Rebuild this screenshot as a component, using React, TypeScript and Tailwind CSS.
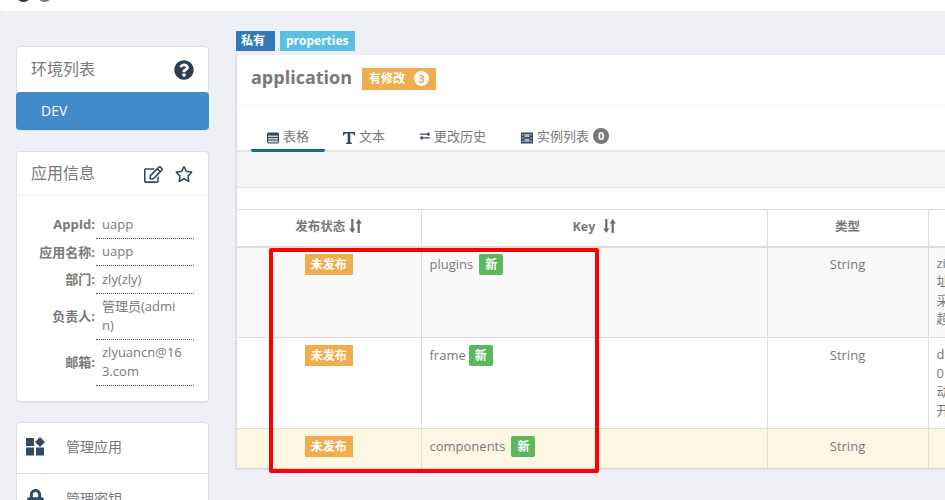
import { FaQuestionCircle, FaRegEdit, FaRegStar, FaLock, FaExchangeAlt } from 'react-icons/fa'

const font = { fontFamily: '"Open Sans", "Noto Sans CJK SC", sans-serif' }

function SortIcon() {
  return (
    <svg width="13" height="14" viewBox="0 0 13 14" fill="#6b6b6b" className="inline-block ml-1 align-[-2px]">
      <path d="M2.2 0h2.2v9.5h2L3.3 14 .2 9.5h2z" />
      <path d="M8.6 14h2.2V4.5h2L9.7 0 6.6 4.5h2z" />
    </svg>
  )
}

function TableIcon() {
  return (
    <svg width="12" height="12" viewBox="0 0 12 12" className="inline-block">
      <rect x="0" y="0.5" width="12" height="11" rx="1.5" fill="#34495e" />
      <path d="M1 3.5h10v1.6H1zM1 6h10v1.6H1zM1 8.500h10V10.500H1z" fill="#c9d0d8" />
    </svg>
  )
}

function TextIcon() {
  return (
    <svg width="12" height="12" viewBox="0 0 12 12" fill="#34495e" className="inline-block">
      <path d="M0 0h12v3.500h-1C10.700 2 10.200 1.500 8 1.500H7.300v8.700l1.500.6V12H3.200v-1.200l1.500-.6V1.500H4C1.800 1.500 1.300 2 1 3.500H0z" />
    </svg>
  )
}

function FilmIcon() {
  return (
    <svg width="12" height="12" viewBox="0 0 12 12" className="inline-block">
      <rect x="0" y="0.500" width="12" height="11" fill="#34495e" />
      <path d="M1 2h1.500v1.500H1zM1 5.200h1.500v1.500H1zM1 8.500h1.500V10H1zM9.500 2H11v1.500H9.500zM9.500 5.200H11v1.500H9.500zM9.500 8.500H11V10H9.500zM3.500 2h5v3.200h-5zM3.500 6.700h5V10h-5z" fill="#aab3bd" />
    </svg>
  )
}

function AppsIcon() {
  return (
    <svg width="19" height="19" viewBox="0 0 19 19" fill="#34495e">
      <rect x="0" y="1" width="8" height="8" />
      <rect x="0" y="10.500" width="8" height="8" />
      <rect x="10" y="10.500" width="8" height="8" />
      <path d="M14 0l5 5-5 5-5-5z" />
    </svg>
  )
}

function InfoRow({ label, value }: { label: string; value: string[] }) {
  return (
    <div className="flex items-center">
      <div className="w-[78px] shrink-0 text-right font-bold text-[#797979]">{label}</div>
      <div className={`w-[98px] ml-[1px] border-b border-dotted border-[#555] pl-[6px] text-[#797979] ${value.length > 1 ? 'py-[3px]' : 'py-[3.5px]'}`}>
        {value.map((v) => (
          <div key={v} className="leading-[19.500px]">{v}</div>
        ))}
      </div>
    </div>
  )
}

function Unpublished() {
  return (
    <span className="inline-block bg-[#f0ad4e] text-white text-[12px] font-bold leading-[21px] px-[6px] h-[21px]">未发布</span>
  )
}

function NewBadge({ className }: { className: string }) {
  return (
    <span className={`inline-block bg-[#5cb85c] text-white text-[12px] font-bold leading-[21px] px-[6px] h-[21px] rounded-[2px] ${className}`}>新</span>
  )
}

const cell = 'border-r border-[#ddd] align-top'

export default function App() {
  return (
    <div style={font} className="relative h-[500px] w-[945px] overflow-hidden bg-[#eff0f5] text-[13px] text-[#797979]">
      <div className="h-[11px] bg-white rounded-bl-[4px] overflow-hidden flex gap-[6px] pl-[16px]">
        <div className="size-[15px] rounded-full bg-[#333] -mt-[13px]" />
        <div className="size-[15px] rounded-full bg-[#777] -mt-[13px]" />
      </div>

      <div className="flex mt-[35px]">
        <aside className="w-[193px] ml-[16px] shrink-0">
          <section className="bg-white border border-[#e0e0e4] rounded-[4px] shadow-[0_1px_1px_rgba(0,0,0,0.05)]">
            <div className="h-[45px] flex items-center justify-between pl-[14px] pr-[14px] pb-[2px] text-[16px]">
              <span>环境列表</span>
              <FaQuestionCircle className="text-[#2c3e50] text-[20px] mt-[2px]" />
            </div>
            <div className="h-[38px] -mx-[1px] -mb-[1px] bg-[#428bca] rounded-[4px] text-white text-[14px] leading-[38px] pl-[25px]">DEV</div>
          </section>

          <section className="mt-[21px] h-[251px] bg-white border border-[#e0e0e4] rounded-[4px] shadow-[0_1px_1px_rgba(0,0,0,0.05)]">
            <div className="h-[44px] flex items-center justify-between pl-[14px] pr-[15px] pb-[2px] border-b border-[#eee] text-[16px]">
              <span>应用信息</span>
              <div className="flex items-center gap-[12px] text-[#34495e] mt-[3px]">
                <FaRegEdit className="text-[19px]" />
                <FaRegStar className="text-[18px]" />
              </div>
            </div>
            <div className="pt-[15px]">
              <InfoRow label="AppId:" value={['uapp']} />
              <InfoRow label="应用名称:" value={['uapp']} />
              <InfoRow label="部门:" value={['zly(zly)']} />
              <InfoRow label="负责人:" value={['管理员(admi', 'n)']} />
              <InfoRow label="邮箱:" value={['zlyuancn@16', '3.com']} />
            </div>
          </section>

          <section className="mt-[20px] bg-white border border-[#e0e0e4] rounded-t-[4px] text-[14px]">
            <div className="h-[51px] flex items-center pl-[9px] pb-[3px] border-b border-[#ddd]">
              <AppsIcon />
              <span className="ml-[21px]">管理应用</span>
            </div>
            <div className="h-[51px] flex items-center pl-[9px] pb-[3px]">
              <FaLock className="text-[#34495e] text-[19px]" />
              <span className="ml-[21px]">管理密钥</span>
            </div>
          </section>
        </aside>

        <main className="ml-[27px] w-[800px] shrink-0 -mt-[15px]">
          <div className="flex gap-[5px] h-[20px] text-white text-[12px] font-bold leading-[20px]">
            <span className="bg-[#337ab7] px-[5px] w-[39px]">私有</span>
            <span className="bg-[#5bc0de] px-[6px] w-[75px]">properties</span>
          </div>
          <div className="mt-[4px] bg-white border-l border-[#ddd] shadow-[0_1px_2px_rgba(0,0,0,0.15)]">
            <div className="h-[51px] flex items-center pl-[14px] pb-[3px] border-b border-[#f0f0f0]">
              <span className="text-[18px] font-bold text-[#797979] -mt-[3px]">application</span>
              <span className="ml-[10px] h-[22px] w-[74px] bg-[#f0ad4e] text-white text-[12px] font-bold flex items-center pl-[7px]">
                有修改
                <span className="ml-[9px] size-[15px] rounded-full bg-white text-[#f0ad4e] text-[11px] leading-[15px] text-center">3</span>
              </span>
            </div>

            <div className="h-[46px] flex items-end pl-[14px] border-b-2 border-[#e4e4e4]">
              <div className="w-[74px] h-[26px] border-b-[3px] border-[#156c82] rounded-b-[2px] flex items-start justify-center gap-[4px] leading-[20px] -mb-[2px]">
                <span className="mt-[4px] leading-none"><TableIcon /></span>表格
              </div>
              <div className="ml-[18px] h-[26px] flex items-start gap-[4px] leading-[20px] -mb-[2px]">
                <span className="mt-[4px] leading-none"><TextIcon /></span>文本
              </div>
              <div className="ml-[35px] h-[26px] flex items-start gap-[4px] leading-[20px] -mb-[2px]">
                <FaExchangeAlt className="text-[#34495e] text-[10px] mt-[5px]" />更改历史
              </div>
              <div className="ml-[35px] h-[26px] flex items-start gap-[4px] leading-[20px] -mb-[2px]">
                <span className="mt-[4px] leading-none"><FilmIcon /></span>实例列表
                <span className="mt-[2px] size-[16px] rounded-full bg-[#777] text-white text-[11px] font-bold leading-[16px] text-center">0</span>
              </div>
            </div>

            <div className="h-[36px] bg-[#f5f5f5] border-b border-[#e4e4e4]" />
            <div className="h-[21px]" />

            <table className="w-[708px] table-fixed border-collapse border-t border-[#ddd]">
              <colgroup>
                <col className="w-[184px]" />
                <col className="w-[346px]" />
                <col className="w-[161px]" />
                <col />
              </colgroup>
              <thead>
                <tr className="h-[37px] border-b-2 border-[#ddd] font-bold text-[12.500px] text-[#797979]">
                  <th className="border-r border-[#ddd] font-bold">发布状态<SortIcon /></th>
                  <th className="border-r border-[#ddd] font-bold">Key <SortIcon /></th>
                  <th className="border-r border-[#ddd] font-bold">类型</th>
                  <th />
                </tr>
              </thead>
              <tbody className="leading-[18.500px]">
                <tr className="h-[91px] bg-[#f9f9f9] border-b border-[#ddd]">
                  <td className={`${cell} text-center pt-[6px]`}><Unpublished /></td>
                  <td className={`${cell} pt-[6px] pl-[8px]`}>plugins<NewBadge className="ml-[6px]" /></td>
                  <td className={`${cell} text-center pt-[7px]`}>String</td>
                  <td className="align-top pt-[6px] pl-[8px] whitespace-nowrap">zip<br />址<br />采<br />超</td>
                </tr>
                <tr className="h-[91px] bg-white border-b border-[#ddd]">
                  <td className={`${cell} text-center pt-[7px]`}><Unpublished /></td>
                  <td className={`${cell} pt-[7px] pl-[8px]`}>frame<NewBadge className="ml-[3px]" /></td>
                  <td className={`${cell} text-center pt-[8px]`}>String</td>
                  <td className="align-top pt-[7px] pl-[8px] whitespace-nowrap">d<br />0<br />动<br />开</td>
                </tr>
                <tr className="h-[39px] bg-[#fcf6e3]">
                  <td className={`${cell} text-center pt-[7px]`}><Unpublished /></td>
                  <td className={`${cell} pt-[7px] pl-[8px]`}>components<NewBadge className="ml-[6px]" /></td>
                  <td className={`${cell} text-center pt-[8px]`}>String</td>
                  <td />
                </tr>
              </tbody>
            </table>
          </div>
        </main>
      </div>

      <div className="absolute left-[269px] top-[248px] w-[330px] h-[225px] border-4 border-[#ff0000] rounded-[2px]" />
    </div>
  )
}
